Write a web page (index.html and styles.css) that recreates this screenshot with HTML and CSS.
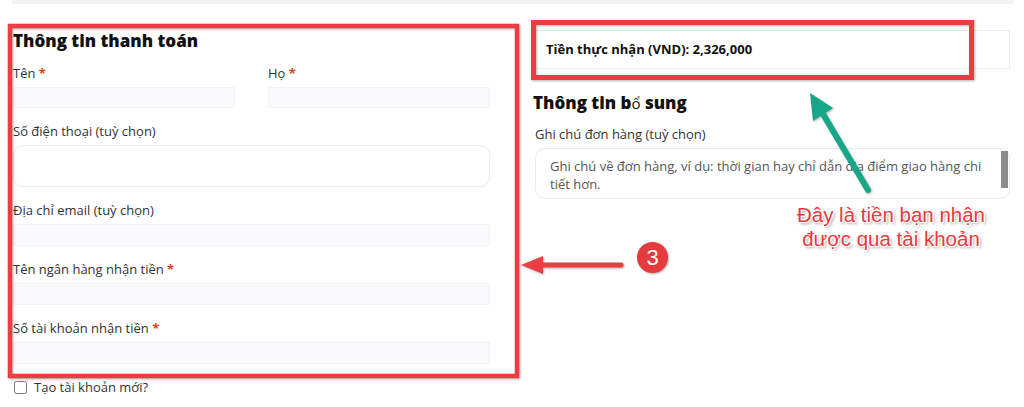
FILE: index.html
```html
<!DOCTYPE html>
<html lang="vi">
<head>
    <meta charset="UTF-8">
    <meta name="viewport" content="width=device-width, initial-scale=1.0">
    <title>Thanh toán</title>
    <link rel="stylesheet" href="styles.css">
</head>
<body>
    <div class="topbar"></div>

    <main class="checkout">
        <section class="billing">
            <h3>Thông tin thanh toán</h3>

            <div class="row-2">
                <div class="field">
                    <label for="firstName">Tên <abbr>*</abbr></label>
                    <input type="text" id="firstName">
                </div>
                <div class="field">
                    <label for="lastName">Họ <abbr>*</abbr></label>
                    <input type="text" id="lastName">
                </div>
            </div>

            <div class="field">
                <label for="phone">Số điện thoại (tuỳ chọn)</label>
                <input type="text" id="phone" class="tall">
            </div>

            <div class="field">
                <label for="email">Địa chỉ email (tuỳ chọn)</label>
                <input type="text" id="email">
            </div>

            <div class="field">
                <label for="bankName">Tên ngân hàng nhận tiền <abbr>*</abbr></label>
                <input type="text" id="bankName">
            </div>

            <div class="field">
                <label for="bankAccount">Số tài khoản nhận tiền <abbr>*</abbr></label>
                <input type="text" id="bankAccount">
            </div>

            <label class="check"><input type="checkbox"> Tạo tài khoản mới?</label>
        </section>

        <section class="aside">
            <div class="payout">Tiền thực nhận (VND): 2,326,000</div>

            <h3>Thông tin b<span class="odd">ổ</span> sung</h3>

            <div class="field">
                <label>Ghi chú đơn hàng (tuỳ chọn)</label>
                <div class="notes">
                    <p>Ghi chú về đơn hàng, ví dụ: thời gian hay chỉ dẫn địa điểm giao hàng chi<br>tiết hơn.</p>
                    <span class="scroll"></span>
                </div>
            </div>
        </section>
    </main>

    <!-- annotation layer -->
    <svg class="marks" width="1024" height="407" viewBox="0 0 1024 407">
        <rect x="10" y="26" width="507" height="350" fill="none" stroke="#ec3d42" stroke-width="4.5"/>
        <rect x="533.5" y="22.5" width="438" height="55" fill="none" stroke="#ec3d42" stroke-width="5"/>
        <line x1="621" y1="265" x2="538" y2="265" stroke="#ec3d42" stroke-width="5" stroke-linecap="round"/>
        <polygon points="521,265 543,256 543,274" fill="#ec3d42"/>
        <line x1="868" y1="190" x2="823" y2="114" stroke="#18a689" stroke-width="6" stroke-linecap="round"/>
        <polygon points="810,93 833,108 813,121" fill="#18a689"/>
    </svg>
    <div class="badge">3</div>
    <div class="callout">Đây là tiền bạn nhận<br>được qua tài khoản</div>
</body>
</html>
```

FILE: styles.css
```css
body {
    margin: 0;
    font-family: "Open Sans", Arial, sans-serif;
    font-size: 13px;
    color: #333;
    background-color: #fff;
    position: relative;
    height: 407px;
    overflow: hidden;
}
.topbar {
    height: 4px;
    margin: 0 11px 0 12px;
    background-color: #f3f3f5;
}
.checkout {
    display: flex;
    gap: 45px;
    padding: 26px 0 0 13px;
}
.billing {
    width: 477px;
}
.aside {
    width: 475px;
}
h3 {
    margin: 0 0 13px;
    font-size: 17px;
    line-height: 21px;
    font-weight: 800;
    color: #111;
}
.odd {
    font-weight: 400;
    font-size: 15px;
}
.row-2 {
    display: flex;
    gap: 33px;
}
.row-2 .field {
    flex: 1;
}
.field {
    margin-bottom: 14px;
}
.field label {
    display: block;
    line-height: 18px;
    margin-bottom: 5px;
}
abbr {
    color: #e2401c;
    font-weight: 700;
    text-decoration: none;
}
.field input {
    display: block;
    width: 100%;
    height: 22px;
    box-sizing: border-box;
    border: 1px solid #f3f3f6;
    border-radius: 2px;
    background-color: #fafafc;
}
.row-2 .field input {
    height: 21px;
}
.field input.tall {
    height: 42px;
    background-color: #fff;
    border: 1px solid #eceef4;
    border-radius: 10px;
    box-shadow: 0 1px 2px rgba(0, 0, 0, 0.03);
}
.check {
    display: flex;
    align-items: center;
    gap: 7px;
    margin-top: 2px;
    line-height: 18px;
}
.check input {
    width: 13px;
    height: 13px;
    margin: 0 0 0 1px;
}
.payout {
    height: 39px;
    box-sizing: border-box;
    padding: 0 10px;
    border: 1px solid #ededed;
    line-height: 37px;
    font-size: 13px;
    font-weight: 700;
    color: #111;
    margin-bottom: 23px;
}
.aside h3 {
    margin-bottom: 11px;
    margin-left: -2px;
}
.notes {
    display: flex;
    height: 51px;
    box-sizing: border-box;
    border: 1px solid #e9ebf0;
    border-radius: 10px;
}
.notes p {
    flex: 1;
    margin: 8px 0 0 14px;
    line-height: 18px;
    color: #555;
    white-space: nowrap;
}
.scroll {
    width: 7px;
    height: 37px;
    margin: 2px 1px 0 0;
    background-color: #8c8c8c;
}
.marks {
    position: absolute;
    top: 0;
    left: 0;
    pointer-events: none;
    filter: drop-shadow(1px 1px 1px rgba(0, 0, 0, 0.3));
}
.badge {
    position: absolute;
    left: 637px;
    top: 242px;
    width: 31px;
    height: 31px;
    border-radius: 50%;
    background-color: #e63b3e;
    color: #fff;
    font-family: "Liberation Sans", Arial, sans-serif;
    font-size: 22px;
    line-height: 31px;
    text-align: center;
    box-shadow: 1px 1px 2px rgba(0, 0, 0, 0.3);
}
.callout {
    position: absolute;
    left: 786px;
    top: 203px;
    width: 210px;
    text-align: center;
    font-family: "Liberation Sans", Arial, sans-serif;
    font-size: 20.5px;
    line-height: 24px;
    color: #e8393d;
    text-shadow: -1px 0 #fff, 1px 0 #fff, 0 -1px #fff, 0 1px #fff, 1px 1px #fff, -1px -1px #fff, 2px 2px 3px rgba(0, 0, 0, 0.4);
}
```
